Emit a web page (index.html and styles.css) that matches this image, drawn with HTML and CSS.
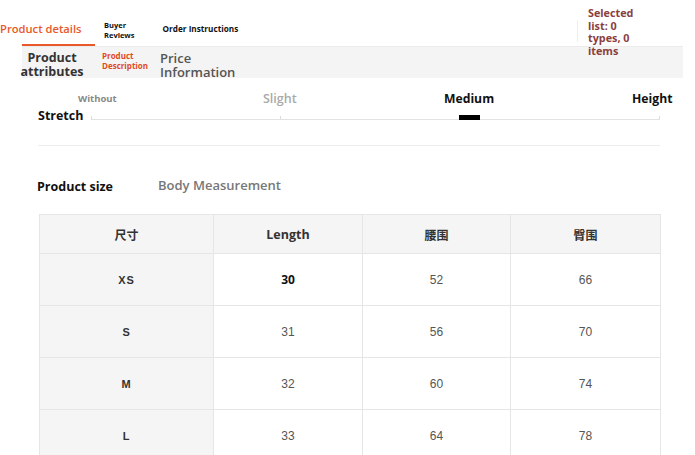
FILE: index.html
```html
<!DOCTYPE html>
<html>
<head>
<meta charset="utf-8">
<link rel="stylesheet" href="styles.css">
</head>
<body>
<div class="page">
  <div class="topnav">
    <div class="tab tab-active"><span class="tab-active-text">Product details</span></div>
    <div class="tab tab-small tab-reviews">Buyer<br>Reviews</div>
    <div class="tab tab-small tab-orders">Order Instructions</div>
    <div class="spacer"></div>
    <div class="selected">
      <div class="divider"></div>
      <div class="selected-text">Selected<br>list: 0<br>types, 0<br>items</div>
    </div>
  </div>
  <div class="subnav">
    <div class="sub sub-attr">Product attributes</div>
    <div class="sub sub-desc">Product<br>Description</div>
    <div class="sub sub-price">Price<br>Information</div>
  </div>

  <div class="stretch">
    <div class="scale-labels">
      <span class="lbl lbl-without">Without</span>
      <span class="lbl lbl-slight">Slight</span>
      <span class="lbl lbl-medium">Medium</span>
      <span class="lbl lbl-height">Height</span>
    </div>
    <div class="stretch-row">
      <div class="stretch-title">Stretch</div>
      <div class="track">
        <span class="tick"></span>
        <span class="tick"></span>
        <span class="tick"></span>
        <span class="tick"></span>
        <span class="marker" style="left: 64.7%"></span>
      </div>
    </div>
  </div>
  <div class="sep"></div>

  <div class="size-head">
    <div class="size-title">Product size</div>
    <div class="size-sub">Body Measurement</div>
  </div>

  <table class="size-table">
    <colgroup>
      <col class="c1"><col class="c2"><col class="c3"><col class="c4">
    </colgroup>
    <thead>
      <tr>
        <th class="cjk">尺寸</th>
        <th class="th-len">Length</th>
        <th class="cjk">腰围</th>
        <th class="cjk">臀围</th>
      </tr>
    </thead>
    <tbody>
      <tr><td class="size">XS</td><td class="val-strong">30</td><td>52</td><td>66</td></tr>
      <tr><td class="size">S</td><td>31</td><td>56</td><td>70</td></tr>
      <tr><td class="size">M</td><td>32</td><td>60</td><td>74</td></tr>
      <tr><td class="size">L</td><td>33</td><td>64</td><td>78</td></tr>
    </tbody>
  </table>
</div>
</body>
</html>
```

FILE: styles.css
```css
html, body {
  margin: 0;
  padding: 0;
  background: #fff;
}
body {
  width: 695px;
  height: 455px;
  overflow: hidden;
  font-family: "Open Sans", "Noto Sans CJK SC", sans-serif;
  color: #222;
}
.page {
  width: 695px;
}

/* top navigation */
.topnav {
  display: flex;
  height: 46px;
  align-items: stretch;
}
.tab {
  font-weight: 700;
  white-space: nowrap;
}
.tab-active {
  margin-left: 22px;
  width: 73px;
  box-sizing: border-box;
  border-bottom: 2px solid #e8582a;
  display: flex;
  align-items: center;
  padding-top: 13px;
}
.tab-active-text {
  margin-left: -22px;
  color: #e8582a;
  font-size: 11.2px;
  font-weight: 600;
}
.tab-small {
  font-size: 7.5px;
  line-height: 10px;
  color: #111;
  display: flex;
  align-items: center;
}
.tab-reviews {
  margin-left: 9px;
  padding-top: 14px;
}
.tab-orders {
  margin-left: 28px;
  padding-top: 12px;
  font-size: 8.2px;
}
.spacer {
  flex: 1;
}
.selected {
  display: flex;
  width: 118px;
}
.divider {
  width: 1px;
  background: #efefef;
  margin-top: 20px;
  height: 22px;
}
.selected-text {
  margin-left: 10px;
  padding-top: 7px;
  font-size: 10.8px;
  line-height: 12.5px;
  font-weight: 700;
  color: #8a3f3f;
  height: 40px;
}

/* sub navigation */
.subnav {
  margin-left: 22px;
  width: 661px;
  height: 31px;
  background: #f4f4f4;
  border-top: 1px solid #ececec;
  display: flex;
  align-items: flex-start;
}
.sub {
  font-weight: 700;
  white-space: nowrap;
}
.sub-attr {
  margin-left: -3px;
  width: 66px;
  text-align: center;
  font-size: 12.5px;
  line-height: 14px;
  color: #333;
  white-space: normal;
  padding-top: 4px;
}
.sub-desc {
  margin-left: 17px;
  font-size: 8px;
  line-height: 10px;
  color: #e04a24;
  padding-top: 4px;
}
.sub-price {
  margin-left: 12px;
  font-size: 13px;
  line-height: 14px;
  font-weight: 600;
  color: #555;
  padding-top: 4px;
}

/* stretch */
.stretch {
  padding-top: 12px;
}
.scale-labels {
  display: grid;
  grid-template-columns: 185px 181px 188px auto;
  margin-left: 78px;
  width: 600px;
  height: 16px;
  align-items: center;
}
.lbl {
  font-weight: 700;
  white-space: nowrap;
}
.lbl-without {
  font-size: 9.5px;
  color: #888;
}
.lbl-slight {
  font-size: 12.5px;
  font-weight: 600;
  color: #aaa;
}
.lbl-medium, .lbl-height {
  font-size: 12.2px;
  color: #111;
}
.stretch-row {
  display: flex;
  align-items: flex-start;
  margin-left: 38px;
  height: 20px;
}
.stretch-title {
  width: 53px;
  font-size: 12.5px;
  font-weight: 700;
  color: #111;
  line-height: 14px;
  margin-top: 3px;
}
.track {
  position: relative;
  width: 569px;
  height: 9px;
  margin-top: 4px;
  border-bottom: 1px solid #e2e2e2;
  display: flex;
  justify-content: space-between;
  align-items: flex-end;
}
.tick {
  width: 1px;
  height: 3px;
  background: #dcdcdc;
}
.marker {
  position: absolute;
  top: 5px;
  width: 21px;
  height: 5px;
  background: #000;
}
.sep {
  margin: 19px 0 0 38px;
  width: 622px;
  height: 1px;
  background: #ececec;
}

/* product size */
.size-head {
  display: flex;
  align-items: center;
  margin-top: 30px;
  margin-left: 37px;
  height: 18px;
}
.size-title {
  width: 121px;
  font-size: 12.5px;
  font-weight: 700;
  color: #111;
  padding-top: 3px;
}
.size-sub {
  font-size: 13px;
  font-weight: 600;
  color: #777;
}

.size-table {
  margin-top: 20px;
  margin-left: 39px;
  border-collapse: collapse;
  table-layout: fixed;
  width: 621px;
}
.c1 { width: 174px; }
.c2 { width: 149px; }
.c3 { width: 148px; }
.c4 { width: 150px; }
.size-table th,
.size-table td {
  border: 1px solid #e6e6e6;
  text-align: center;
  padding: 0;
}
.size-table th {
  height: 38px;
  background: #f5f5f5;
  color: #333;
  font-weight: 700;
}
.size-table td {
  height: 51px;
  font-family: "Liberation Sans", Arial, sans-serif;
  font-size: 12px;
  color: #555;
}
.cjk {
  font-family: "Noto Sans CJK SC", sans-serif;
  font-size: 12px;
}
.th-len {
  font-family: "Open Sans", sans-serif;
  font-size: 12.5px;
  color: #222;
}
.size-table td.size {
  background: #f5f5f5;
  font-weight: 700;
  font-size: 11px;
  color: #333;
  letter-spacing: 0.8px;
}
.size-table td.val-strong {
  font-family: "Open Sans", sans-serif;
  font-weight: 700;
  font-size: 12px;
  color: #111;
}
```
